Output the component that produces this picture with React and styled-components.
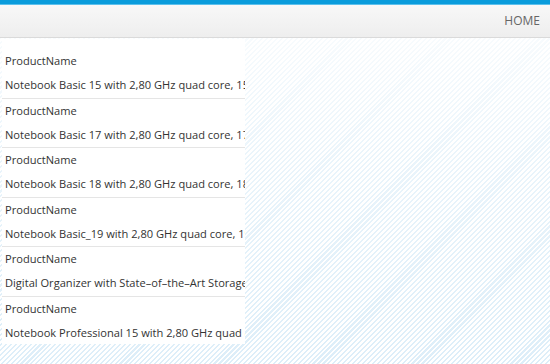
import React from "react";
import styled, { createGlobalStyle } from "styled-components";

const Global = createGlobalStyle`
  html, body { margin: 0; padding: 0; }
  body {
    width: 550px;
    height: 364px;
    overflow: hidden;
    font-family: "Open Sans", "Noto Sans", sans-serif;
    background-color: #ffffff;
    background-image:
      linear-gradient(to bottom, rgba(255,255,255,0.9) 0%, rgba(255,255,255,0.45) 45%, rgba(255,255,255,0.1) 100%),
      repeating-linear-gradient(135deg, #ffffff 0px, #ffffff 2px, #d9ecf8 2px, #d9ecf8 3.5px);
  }
`;

const Page = styled.div`
  display: flex;
  flex-direction: column;
  height: 364px;
`;

const Shell = styled.header`
  height: 33px;
  border-top: 4px solid #0a9cdc;
  box-shadow: inset 0 1px 0 #5cc0ec;
  background: linear-gradient(to bottom, #f8f8f8, #eeeeee);
  border-bottom: 1px solid #dadada;
  display: flex;
  align-items: center;
  justify-content: flex-end;
  padding-right: 10px;
`;

const NavItem = styled.span`
  font-size: 12px;
  color: #666666;
  padding-bottom: 1px;
`;

const Panel = styled.ul`
  list-style: none;
  margin: 1px 0 0 2px;
  padding: 10px 0 0 0;
  width: 243px;
  height: 295px;
  background: #ffffff;
  overflow: hidden;
`;

const Item = styled.li`
  height: 48.5px;
  border-bottom: 1px solid #e5e5e5;
  padding: 0 0 0 3px;
  display: flex;
  flex-direction: column;
  white-space: nowrap;
  overflow: hidden;
  &:last-child { border-bottom: none; }
`;

const Label = styled.div`
  font-size: 11.1px;
  line-height: 16px;
  color: #333333;
  margin-top: 4px;
`;

const Value = styled.div`
  font-size: 11.1px;
  line-height: 16px;
  color: #333333;
  margin-top: 8px;
`;

const products = [
  "Notebook Basic 15 with 2,80 GHz quad core, 15\" LCD, 4 GB DDR3 RAM",
  "Notebook Basic 17 with 2,80 GHz quad core, 17\" LCD, 4 GB DDR3 RAM",
  "Notebook Basic 18 with 2,80 GHz quad core, 18\" LCD, 8 GB DDR3 RAM",
  "Notebook Basic_19 with 2,80 GHz quad core, 19\" LCD, 8 GB DDR3 RAM",
  "Digital Organizer with State\u2013of\u2013the\u2013Art Storage Encryption",
  "Notebook Professional 15 with 2,80 GHz quad core, 15\" Multitouch LCD",
];

export default function App() {
  return (
    <>
      <Global />
      <Page>
        <Shell>
          <NavItem>HOME</NavItem>
        </Shell>
        <Panel>
          {products.map((p, i) => (
            <Item key={i}>
              <Label>ProductName</Label>
              <Value>{p}</Value>
            </Item>
          ))}
        </Panel>
      </Page>
    </>
  );
}
